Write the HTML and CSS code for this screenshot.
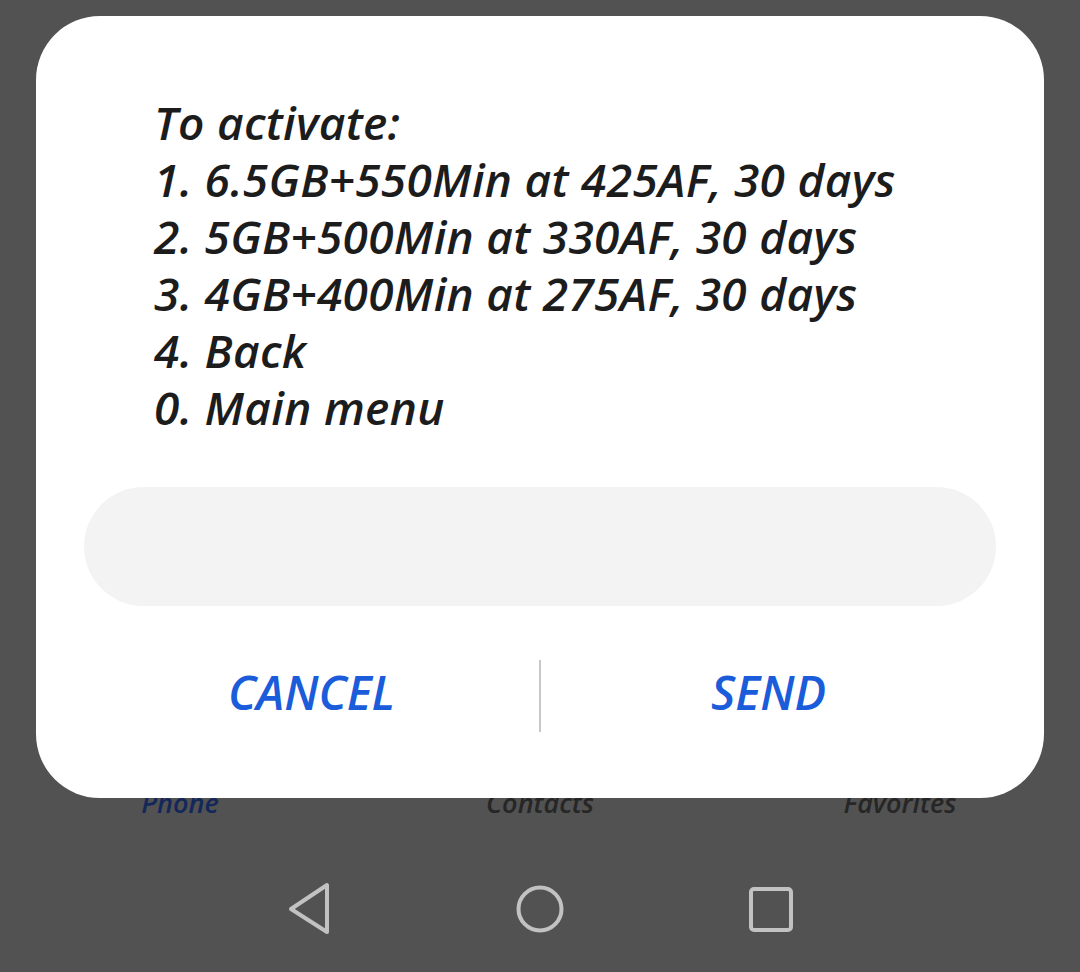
FILE: index.html
```html
<!DOCTYPE html>
<html lang="en">
  <head>
    <meta charset="UTF-8" />
    <meta name="viewport" content="width=device-width, initial-scale=1.0" />
    <title>USSD Dialog</title>
    <link rel="stylesheet" href="styles.css">
  </head>
  <body>
    <div class="screen">
      <nav class="tabs">
        <span class="tab tab-active">Phone</span>
        <span class="tab">Contacts</span>
        <span class="tab">Favorites</span>
      </nav>
      <div class="navbar">
        <svg class="nav-icon" width="60" height="56" viewBox="0 0 60 56">
          <path d="M48 4 L48 51 L12 28 Z" fill="none" stroke="#c2c2c2" stroke-width="4" stroke-linejoin="round" />
        </svg>
        <svg class="nav-icon" width="60" height="56" viewBox="0 0 60 56">
          <circle cx="30" cy="28" r="21.5" fill="none" stroke="#c2c2c2" stroke-width="4" />
        </svg>
        <svg class="nav-icon" width="60" height="56" viewBox="0 0 60 56">
          <rect x="10" y="8" width="40" height="41" rx="3" fill="none" stroke="#c2c2c2" stroke-width="4" />
        </svg>
      </div>
    </div>

    <div class="dialog">
      <div class="message">
        <p>To activate:</p>
        <p>1. 6.5GB+550Min at 425AF, 30 days</p>
        <p>2. 5GB+500Min at 330AF, 30 days</p>
        <p>3. 4GB+400Min at 275AF, 30 days</p>
        <p>4. Back</p>
        <p>0. Main menu</p>
      </div>
      <div class="reply"></div>
      <div class="actions">
        <button>CANCEL</button>
        <span class="divider"></span>
        <button>SEND</button>
      </div>
    </div>
  </body>
</html>
```

FILE: styles.css
```css
body {
  margin: 0;
  background: #525252;
  font-family: "Open Sans", "Noto Sans", sans-serif;
}

.screen {
  height: 972px;
  display: flex;
  flex-direction: column;
  justify-content: flex-end;
}

.tabs {
  display: grid;
  grid-template-columns: 1fr 1fr 1fr;
  justify-items: center;
  margin-bottom: 26px;
}

.tab {
  font-size: 27px;
  font-style: italic;
  font-weight: 600;
  color: #262626;
  line-height: 34px;
}

.tab-active {
  color: #13275a;
}

.navbar {
  display: flex;
  justify-content: center;
  align-items: center;
  gap: 171px;
  height: 126px;
}

/* The USSD popup */
.dialog {
  position: absolute;
  left: 36px;
  top: 16px;
  width: 1008px;
  height: 782px;
  background: #fff;
  border-radius: 64px;
  box-sizing: border-box;
  padding: 78px 48px 0;

  .message {
    padding-left: 70px;

    p {
      margin: 0;
      font-size: 46px;
      font-style: italic;
      font-weight: 600;
      line-height: 57px;
      letter-spacing: 0.3px;
      color: #1c1c1c;
    }
  }

  .reply {
    margin-top: 51px;
    height: 119px;
    background: #f3f3f3;
    border-radius: 60px;
  }

  .actions {
    display: flex;
    align-items: center;
    margin-top: 54px;

    button {
      flex: 1;
      background: none;
      border: none;
      font-family: inherit;
      font-size: 47px;
      font-style: italic;
      font-weight: 600;
      color: #1a5cd9;
      padding: 0 0 8px;
      height: 72px;
    }
  }

  .divider {
    width: 2px;
    height: 72px;
    background: #c8c8c8;
  }
}
```
